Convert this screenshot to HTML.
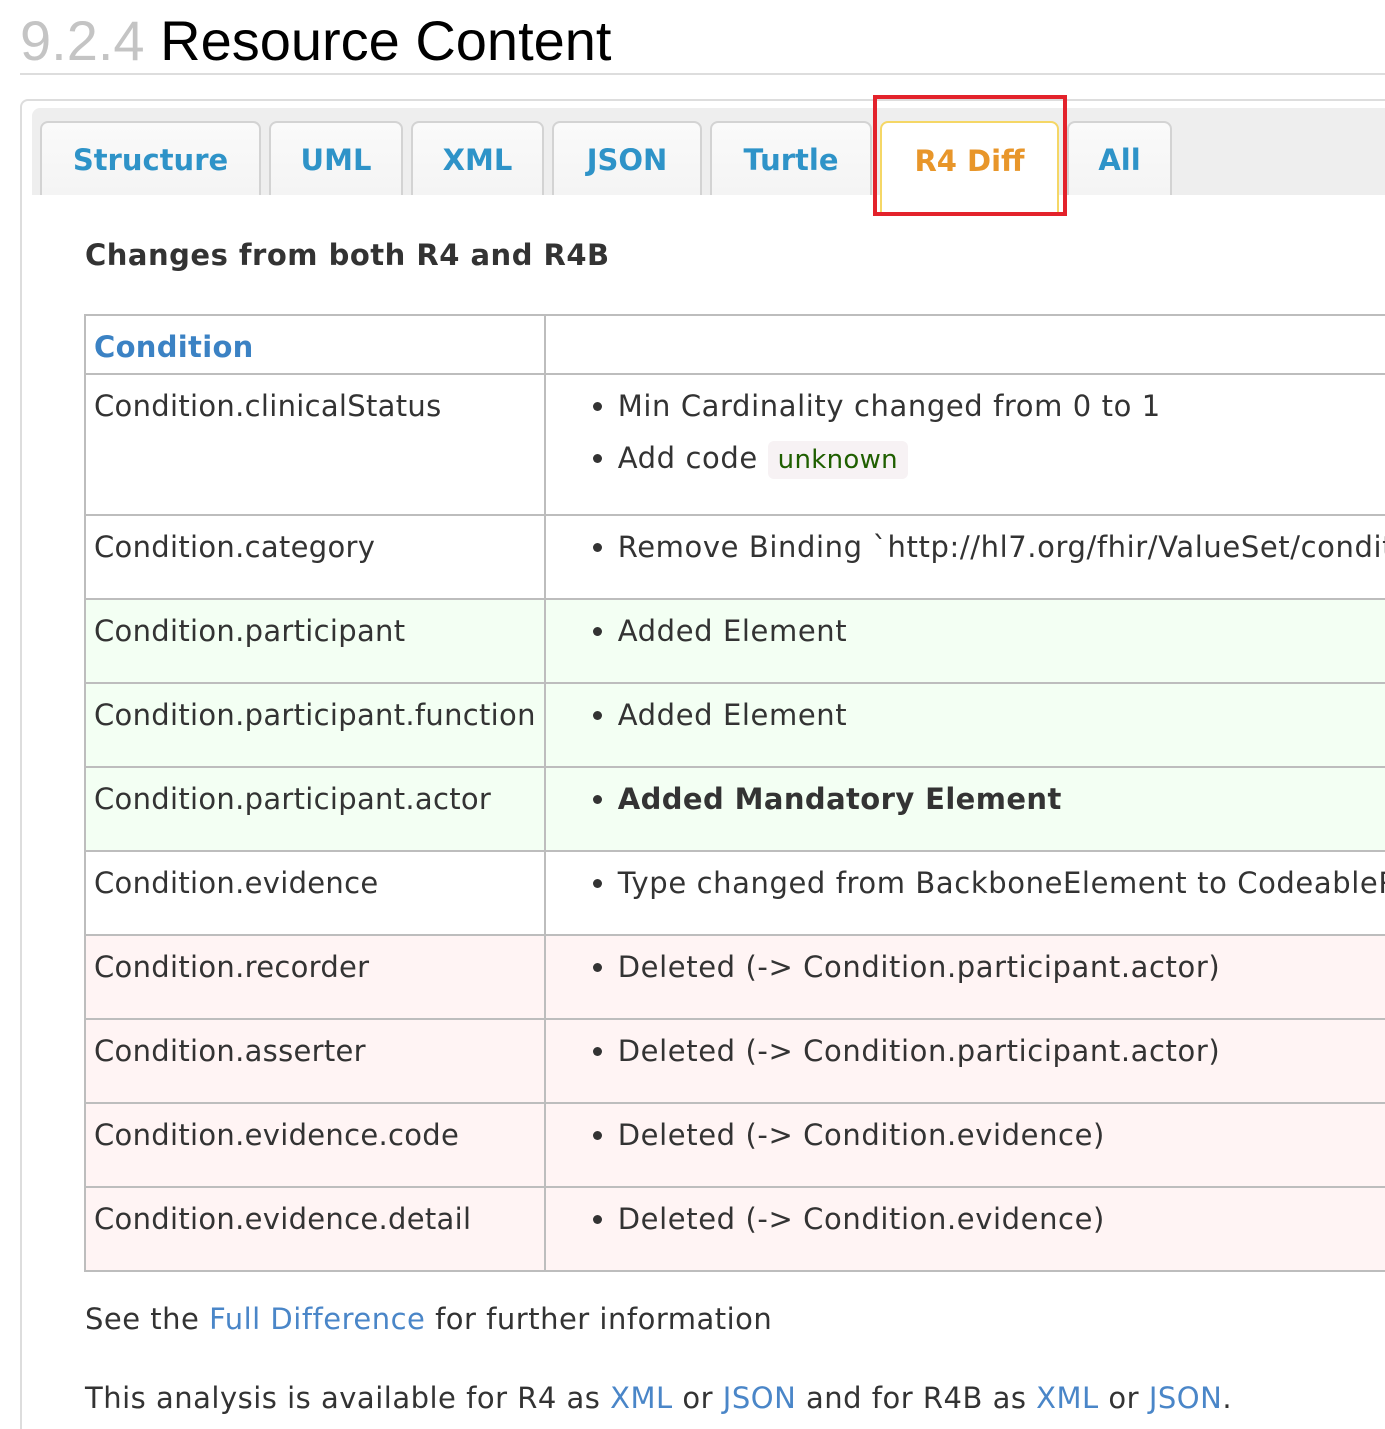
<!DOCTYPE html>
<html><head><meta charset="utf-8"><style>
html,body{margin:0;width:1385px;height:1429px;overflow:hidden}
body{background:#fff;font-family:"DejaVu Sans",sans-serif;color:#333;position:relative}
.t{position:absolute;left:20px;top:8px;font-family:"Liberation Sans",sans-serif;font-size:56px;color:#000;white-space:nowrap}
.t span{color:#c4c4c4}
.hr{position:absolute;left:20px;top:73px;width:1365px;height:2px;background:#ddd}
.panel{position:absolute;left:20px;top:99px;width:1363px;height:1330px;border:2px solid #ddd;border-right:none;border-bottom:none;border-radius:8px 0 0 0}
.bar{position:absolute;left:32px;top:108px;width:1353px;height:87px;background:#eee;border-radius:8px 0 0 0}
.tab{position:absolute;top:121px;height:74px;box-sizing:border-box;border:2px solid #d3d3d3;border-bottom:none;border-radius:8px 8px 0 0;background:linear-gradient(#fafafa,#f4f4f4);color:#2e93c8;font-weight:bold;font-size:29px;text-align:center;line-height:74px}
.tab.a{background:#fff;border-color:#f5d766;color:#e8962a;height:95px;line-height:76px}
.red{position:absolute;left:873px;top:95px;width:186px;height:113px;border:4px solid #e3222b}
h3{position:absolute;left:85px;top:238px;margin:0;font-size:29px;font-weight:bold;color:#333;white-space:nowrap;letter-spacing:.5px}
.clip{position:absolute;left:0;top:0;width:1385px;height:1429px;overflow:hidden}
table{position:absolute;left:84px;top:314px;border-collapse:collapse;width:1420px;font-size:29px;letter-spacing:.6px}
td{border:2px solid #bdbdbd;vertical-align:top;padding:14px 8px 0 8px;line-height:34px;white-space:nowrap}
td.c1{width:447px;letter-spacing:.3px}
ul{margin:0;padding:0 0 0 64px}
li{margin:0 0 12px}
.g td{background:#f3fff3}.r td{background:#fff4f4}
.hd{color:#3b82c4;font-weight:bold}
code{font-family:"DejaVu Sans",sans-serif;background:#f7f2f4;color:#1f5f00;padding:4px 10px;border-radius:6px;font-size:26px;letter-spacing:.3px}
.p{position:absolute;left:85px;font-size:29px;letter-spacing:.5px;white-space:nowrap}
a{color:#4a86c8;text-decoration:none}
</style></head><body>
<div class="t"><span>9.2.4</span> Resource Content</div>
<div class="hr"></div>
<div class="panel"></div>
<div class="bar"></div>
<div class="tab" style="left:40px;width:221px">Structure</div>
<div class="tab" style="left:269px;width:134px">UML</div>
<div class="tab" style="left:411px;width:133px">XML</div>
<div class="tab" style="left:552px;width:150px">JSON</div>
<div class="tab" style="left:710px;width:162px">Turtle</div>
<div class="tab a" style="left:880px;width:179px">R4 Diff</div>
<div class="tab" style="left:1067px;width:105px">All</div>
<div class="red"></div>
<h3>Changes from both R4 and R4B</h3>
<div class="clip">
<table>
<tr style="height:59px"><td class="c1 hd">Condition</td><td></td></tr>
<tr style="height:141px"><td class="c1">Condition.clinicalStatus</td><td><ul><li>Min Cardinality changed from 0 to 1</li><li style="margin-top:18px">Add code <code>unknown</code></li></ul></td></tr>
<tr style="height:84px"><td class="c1">Condition.category</td><td><ul><li>Remove Binding `http://hl7.org/fhir/ValueSet/condition-category</li></ul></td></tr>
<tr class="g" style="height:84px"><td class="c1">Condition.participant</td><td><ul><li>Added Element</li></ul></td></tr>
<tr class="g" style="height:84px"><td class="c1">Condition.participant.function</td><td><ul><li>Added Element</li></ul></td></tr>
<tr class="g" style="height:84px"><td class="c1">Condition.participant.actor</td><td><ul><li><b style="letter-spacing:.4px">Added Mandatory Element</b></li></ul></td></tr>
<tr style="height:84px"><td class="c1">Condition.evidence</td><td><ul><li>Type changed from BackboneElement to CodeableReference</li></ul></td></tr>
<tr class="r" style="height:84px"><td class="c1">Condition.recorder</td><td><ul><li>Deleted (-&gt; Condition.participant.actor)</li></ul></td></tr>
<tr class="r" style="height:84px"><td class="c1">Condition.asserter</td><td><ul><li>Deleted (-&gt; Condition.participant.actor)</li></ul></td></tr>
<tr class="r" style="height:84px"><td class="c1">Condition.evidence.code</td><td><ul><li>Deleted (-&gt; Condition.evidence)</li></ul></td></tr>
<tr class="r" style="height:84px"><td class="c1">Condition.evidence.detail</td><td><ul><li>Deleted (-&gt; Condition.evidence)</li></ul></td></tr>
</table>
</div>
<div class="p" style="top:1302px">See the <a>Full Difference</a> for further information</div>
<div class="p" style="top:1381px">This analysis is available for R4 as <a>XML</a> or <a>JSON</a> and for R4B as <a>XML</a> or <a>JSON</a>.</div>
</body></html>
